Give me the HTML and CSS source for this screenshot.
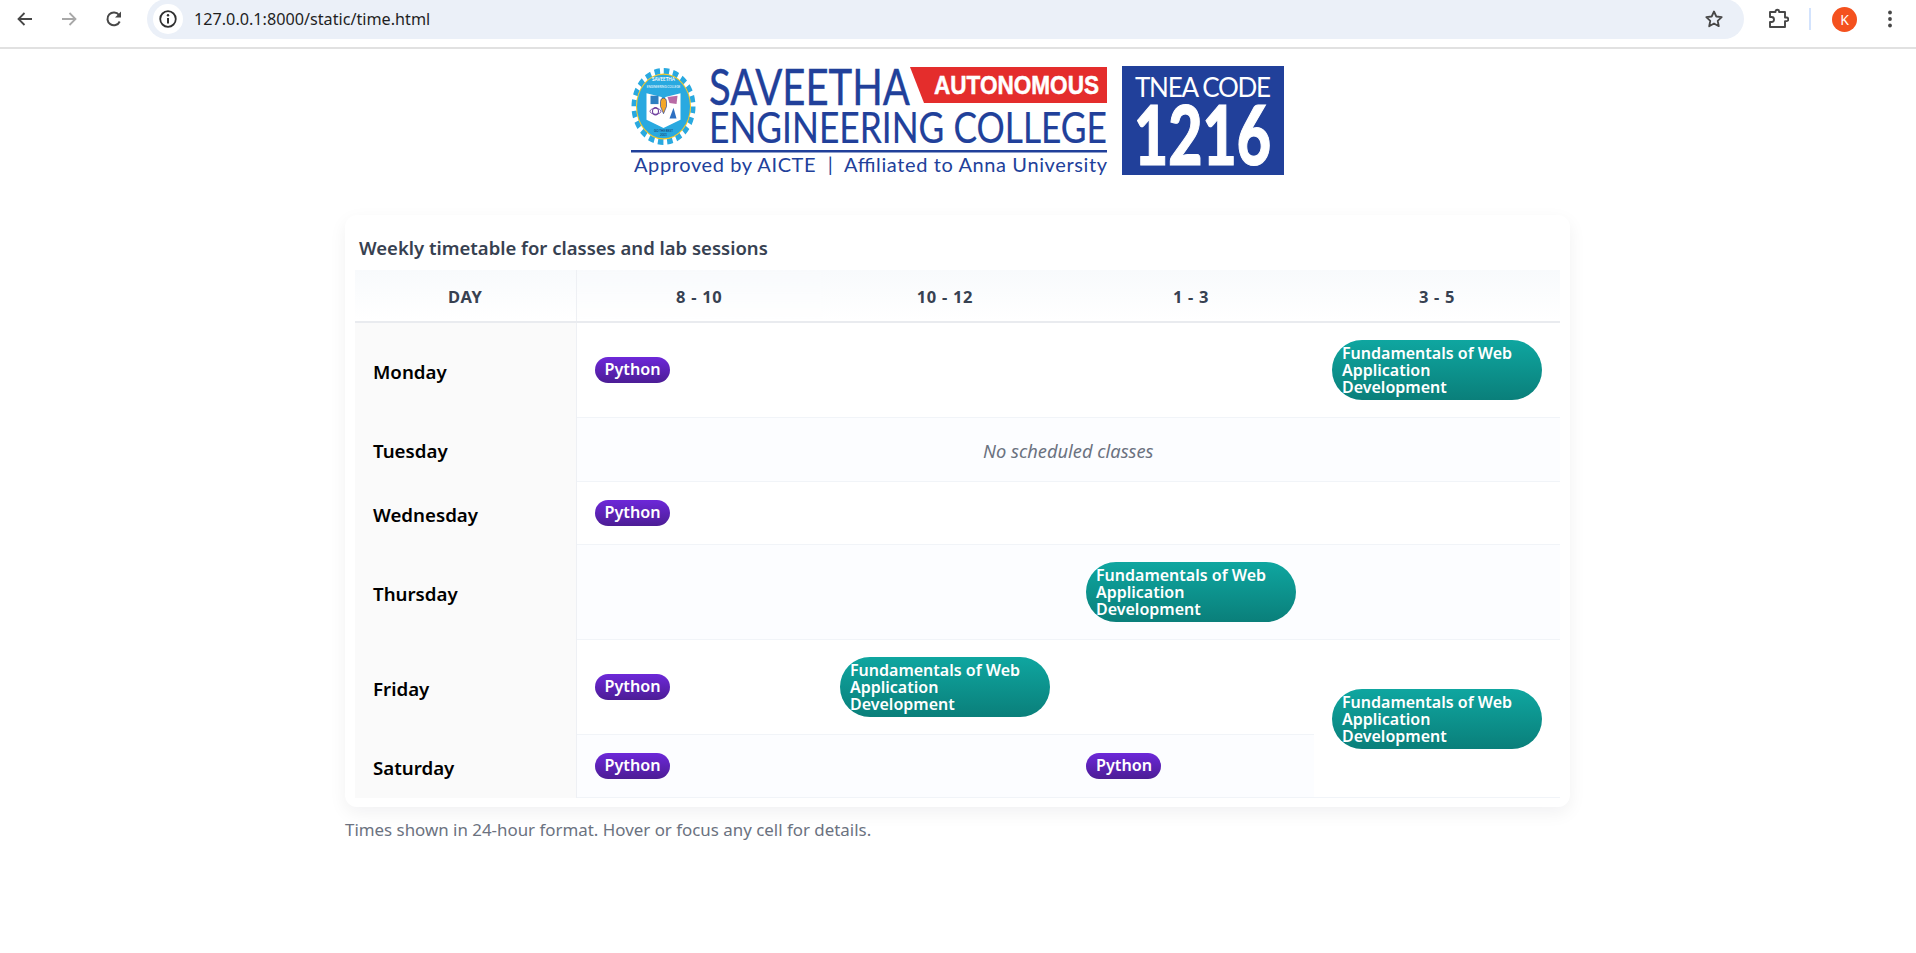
FILE: index.html
```html
<!DOCTYPE html>
<html lang="en">
<head>
<meta charset="utf-8">
<title>Timetable</title>
<link rel="stylesheet" href="styles.css">
</head>
<body>
<header class="browser">
  <svg class="nav" width="20" height="20" viewBox="0 0 20 20"><path d="M17 10H4M9.500 4 3.500 10l6 6" fill="none" stroke="#474747" stroke-width="1.800"/></svg>
  <svg class="nav" width="20" height="20" viewBox="0 0 20 20"><path d="M3 10h13M10.500 4l6 6-6 6" fill="none" stroke="#a8a8a8" stroke-width="1.800"/></svg>
  <svg class="nav" width="20" height="20" viewBox="0 0 20 20"><path d="M15.700 12.500A6.400 6.400 0 1 1 15 6" fill="none" stroke="#474747" stroke-width="2"/><path d="M17 2.500V8.500h-6z" fill="#474747"/></svg>
  <div class="omnibox">
    <span class="site-chip"><svg width="20" height="20" viewBox="0 0 18 18"><circle cx="9" cy="9" r="7" fill="none" stroke="#303030" stroke-width="1.600"/><path d="M9 8v5" stroke="#303030" stroke-width="1.800"/><circle cx="9" cy="5.600" r="1.100" fill="#303030"/></svg></span>
    <span class="url">127.0.0.1:8000/static/time.html</span>
    <svg class="star" width="20" height="20" viewBox="0 0 20 20"><path d="m10 2.500 2.300 5 5.400.6-4 3.700 1.100 5.400-4.800-2.700-4.800 2.700 1.100-5.400-4-3.700 5.400-.6z" fill="none" stroke="#474747" stroke-width="1.800" stroke-linejoin="round"/></svg>
  </div>
  <div class="toolbar">
    <svg width="22" height="22" viewBox="0 0 22 22"><path d="M3 4h5.500V3.500a1.800 1.800 0 0 1 3.600 0V4H18v5.500h1.500a1.800 1.800 0 0 1 0 3.600H18V19H3v-5h1.500a2.500 2.500 0 0 0 0-5H3z" fill="none" stroke="#474747" stroke-width="1.900" stroke-linejoin="round"/></svg>
    <span class="divider"></span>
    <span class="avatar">K</span>
    <svg width="6" height="20" viewBox="0 0 6 20"><circle cx="3" cy="3.500" r="1.900" fill="#474747"/><circle cx="3" cy="10" r="1.900" fill="#474747"/><circle cx="3" cy="16.500" r="1.900" fill="#474747"/></svg>
  </div>
</header>
<main class="page">
  <svg class="logo" width="653" height="111" viewBox="0 0 653 111" role="img" aria-label="Saveetha Engineering College">
    <g transform="translate(32.500 40.500) scale(1 1.200)">
      <circle r="29.500" fill="none" stroke="#29a9e0" stroke-width="5" stroke-dasharray="5.500 3.770"/>
      <circle r="27.500" fill="#f3c728"/>
      <circle r="26.500" fill="#29a9e0"/>
      <path d="M-17 -11 -2 -8 0 -5 2 -8 17 -11V11L0 18-17 11z" fill="#fff"/>
      <rect x="-13" y="-9" width="8" height="7" fill="#2d7fc1"/>
      <path d="M4 -8 14 -9 13 -2 6 -3z" fill="#b86aa5"/>
      <circle cx="-8" cy="4" r="3" fill="none" stroke="#6c3c9c" stroke-width="1.100"/>
      <ellipse cx="-8" cy="4" rx="5.500" ry="2.400" fill="none" stroke="#6c3c9c" stroke-width=".8"/>
      <path d="M6 10 10 1 13 10z" fill="#2d6fc1"/>
      <path d="M0 -7a3 3 0 0 1 3 3v4l-3 6-3-6v-4a3 3 0 0 1 3-3z" fill="#f3a728" stroke="#21409a" stroke-width=".6"/>
      <text class="lg-tiny" x="0" y="-21" text-anchor="middle">SAVEETHA</text>
      <text class="lg-tinier" x="0" y="-15.500" text-anchor="middle">ENGINEERING COLLEGE</text>
      <text class="lg-tinier lg-dark" x="0" y="21.500" text-anchor="middle">GO THE BEST</text>
      <text class="lg-tinier lg-dark" x="0" y="25" text-anchor="middle">2001</text>
    </g>
    <path d="M279 1h197v36h-183z" fill="#e42d2c"/>
    <rect x="491" y="0" width="162" height="109" fill="#21409a"/>
    <g class="logo-blue">
      <text class="lg-name" x="78" y="39" textLength="201" lengthAdjust="spacingAndGlyphs">SAVEETHA</text>
      <text class="lg-name2" x="78" y="77" textLength="398" lengthAdjust="spacingAndGlyphs">ENGINEERING COLLEGE</text>
      <text class="lg-sub" x="3" y="106" textLength="473" lengthAdjust="spacing">Approved by AICTE  |  Affiliated to Anna University</text>
    </g>
    <rect x="0" y="84" width="476" height="2.500" fill="#21409a"/>
    <text class="lg-auto" x="303" y="28" textLength="165" lengthAdjust="spacingAndGlyphs">AUTONOMOUS</text>
    <text class="lg-tnea" x="504" y="31" textLength="136" lengthAdjust="spacing">TNEA CODE</text>
    <text class="lg-code" x="503" y="99" textLength="137" lengthAdjust="spacingAndGlyphs">1216</text>
  </svg>
  <section class="card">
    <h1 class="caption">Weekly timetable for classes and lab sessions</h1>
    <table class="timetable">
      <thead>
        <tr><th class="day-head">DAY</th><th>8 - 10</th><th>10 - 12</th><th>1 - 3</th><th>3 - 5</th></tr>
      </thead>
      <tbody>
        <tr>
          <th class="day">Monday</th>
          <td><span class="pill python">Python</span></td><td></td><td></td>
          <td><span class="pill web">Fundamentals of Web Application Development</span></td>
        </tr>
        <tr class="alt">
          <th class="day">Tuesday</th>
          <td colspan="4" class="none">No scheduled classes</td>
        </tr>
        <tr>
          <th class="day">Wednesday</th>
          <td><span class="pill python">Python</span></td><td></td><td></td><td></td>
        </tr>
        <tr class="alt">
          <th class="day">Thursday</th>
          <td></td><td></td>
          <td><span class="pill web">Fundamentals of Web Application Development</span></td>
          <td></td>
        </tr>
        <tr>
          <th class="day">Friday</th>
          <td><span class="pill python">Python</span></td>
          <td><span class="pill web">Fundamentals of Web Application Development</span></td>
          <td></td>
          <td rowspan="2" class="span-cell"><span class="pill web">Fundamentals of Web Application Development</span></td>
        </tr>
        <tr class="alt">
          <th class="day">Saturday</th>
          <td><span class="pill python">Python</span></td>
          <td></td>
          <td><span class="pill python">Python</span></td>
        </tr>
      </tbody>
    </table>
  </section>
  <p class="note">Times shown in 24-hour format. Hover or focus any cell for details.</p>
</main>
</body>
</html>
```
FILE: styles.css
```css
* { box-sizing: border-box; }
html, body { margin: 0; background: #fff; }
body { font-family: "Noto Sans", "Open Sans", sans-serif; color: #000; height: 953px; overflow: hidden; }

.browser { display: flex; align-items: center; height: 49px; padding: 0 16px 9px 15px; border-bottom: 2px solid #e1e1e1; background: #fff; }
.nav { margin-right: 24px; flex: none; }
.nav:nth-child(3) { margin-right: 23px; margin-left: 1px; }
.omnibox { flex: 1; display: flex; align-items: center; height: 40px; border-radius: 20px; background: #ebf0f8; padding: 0 20px 0 6px; }
.site-chip { width: 30px; height: 30px; border-radius: 50%; background: #fff; display: flex; align-items: center; justify-content: center; margin-right: 11px; }
.url { font-size: 16.200px; color: #1f1f1f; flex: 1; }
.toolbar { display: flex; align-items: center; width: 156px; padding-left: 23px; }
.divider { width: 2px; height: 22px; background: #d3e3fd; margin: 0 21px 0 20px; }
.avatar { width: 25px; height: 25px; border-radius: 50%; background: #f4511e; color: #fff; font-size: 14px; display: flex; align-items: center; justify-content: center; margin-right: 30px; }

.page { width: 1226px; padding-right: 1px; margin: 0 auto; }
.logo { display: block; margin: 17px auto 38px; }
.logo-blue { fill: #21409a; stroke: #21409a; }
.logo text { font-family: "Lato", "Noto Sans", sans-serif; }
.lg-name { font-size: 51px; stroke-width: .4; }
.lg-name2 { font-size: 42px; stroke-width: .2; }
.logo .lg-sub { font-size: 20px; stroke-width: 0; white-space: pre; }
.logo .lg-auto { font-family: "Liberation Sans", sans-serif; font-size: 26px; font-weight: 700; fill: #fff; stroke: #fff; stroke-width: .5; }
.lg-tnea { font-size: 26px; fill: #fff; }
.lg-code { font-size: 82px; font-weight: 900; fill: #fff; stroke: #fff; stroke-width: 1.200; }
.lg-tiny { font-size: 4.500px; font-weight: 700; fill: #fff; }
.lg-tinier { font-size: 3px; fill: #fff; }
.lg-dark { fill: #12305f; }

.card { background: #fff; border-radius: 12px; box-shadow: 0 6px 18px rgba(15, 23, 42, .06); padding: 20px 10px 9px; }
.caption { margin: 0 0 9px 4px; font-size: 18.500px; line-height: 26px; font-weight: 600; color: #374151; }
.timetable { width: 100%; table-layout: fixed; border-collapse: collapse; }
.timetable thead th { height: 52px; padding-top: 3px; font-size: 16.500px; font-weight: 700; letter-spacing: .7px; color: #374151; background: linear-gradient(#f8fafc, #fff); border-bottom: 2px solid #e9ebef; text-align: center; }
.timetable thead .day-head { width: 221px; border-right: 1px solid #eef0f4; }
.timetable td { height: 63px; padding: 17px 18px; border-bottom: 1px solid #f1f4f8; vertical-align: middle; }
.day { text-align: left; padding: 2px 18px 0; font-size: 18.700px; font-weight: 600; background: #fafafa; border-right: 1px solid #eef0f4; }
.alt td { background: #fcfdff; }
.alt .day { background: #fafafa; }
.span-cell, .alt td.span-cell { background: #fff; }
.timetable .none { height: 64px; padding-top: 19px; text-align: center; font-style: italic; color: #6b7280; font-size: 18.300px; }
.pill { display: block; color: #fff; font-weight: 600; line-height: 17px; }
.python { width: fit-content; font-size: 16.200px; padding: 4px 9px 5px 10px; border-radius: 13px; background: linear-gradient(#6d28d9, #4c1d95); }
.web { font-size: 16px; padding: 5px 10px 4px; border-radius: 30px; background: linear-gradient(#0fa6a0, #0a7f7a); }
.note { margin: 11px 0 0; font-size: 16.900px; line-height: 24px; color: #6b7280; }
```
